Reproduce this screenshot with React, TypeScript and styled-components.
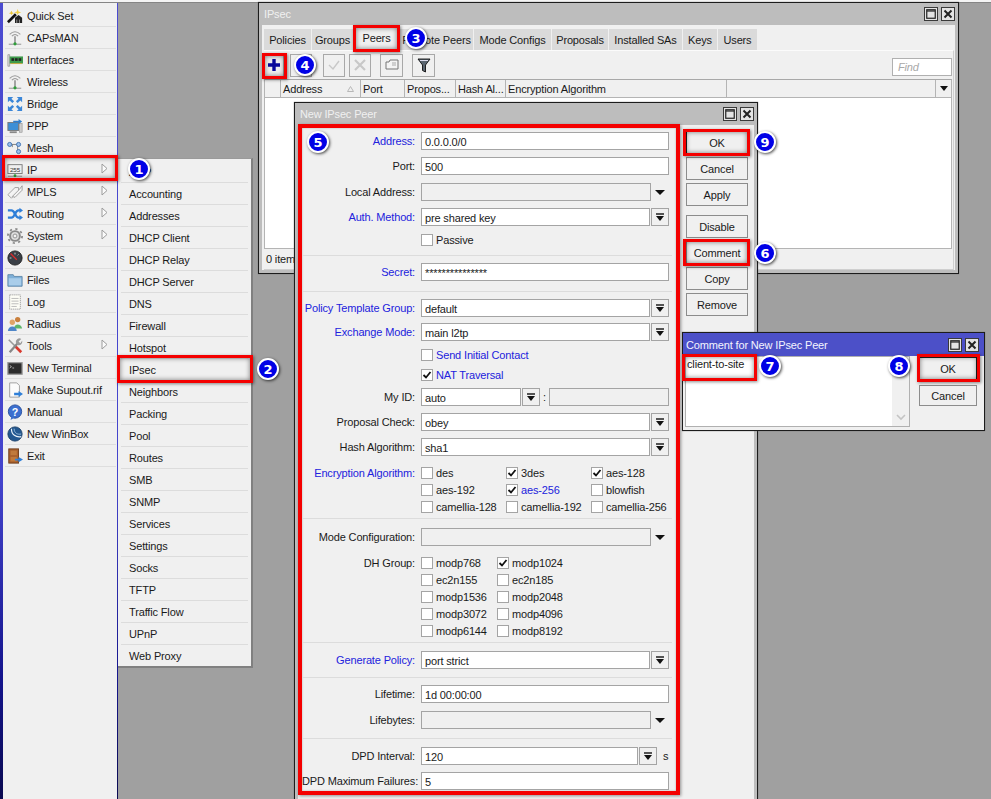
import React from 'react'
import styled, { createGlobalStyle, css } from 'styled-components'

const SIDE_ITEMS: [string, string, boolean?][] = [
    ['wand', 'Quick Set'],
    ['antenna', 'CAPsMAN'],
    ['card', 'Interfaces'],
    ['antenna', 'Wireless'],
    ['bridge', 'Bridge'],
    ['ppp', 'PPP'],
    ['mesh', 'Mesh'],
    ['ip', 'IP', true],
    ['tags', 'MPLS', true],
    ['routing', 'Routing', true],
    ['gear', 'System', true],
    ['gauge', 'Queues'],
    ['folder', 'Files'],
    ['doc', 'Log'],
    ['people', 'Radius'],
    ['tools', 'Tools', true],
    ['terminal', 'New Terminal'],
    ['supout', 'Make Supout.rif'],
    ['help', 'Manual'],
    ['globe', 'New WinBox'],
    ['door', 'Exit'],
]

const IP_ITEMS = [
    'ARP', 'Accounting', 'Addresses', 'DHCP Client', 'DHCP Relay', 'DHCP Server', 'DNS', 'Firewall',
    'Hotspot', 'IPsec', 'Neighbors', 'Packing', 'Pool', 'Routes', 'SMB', 'SNMP', 'Services',
    'Settings', 'Socks', 'TFTP', 'Traffic Flow', 'UPnP', 'Web Proxy',
]

const TABS: [string, number][] = [
    ['Policies', 47], ['Groups', 41], ['Peers', 45], ['Remote Peers', 73], ['Mode Configs', 77],
    ['Proposals', 56], ['Installed SAs', 73], ['Keys', 34], ['Users', 39],
]

const COLUMNS: [string, number][] = [
    ['', 16], ['Address', 80], ['Port', 44], ['Propos...', 51], ['Hash Al...', 50], ['Encryption Algorithm', 221],
]

const ENCRYPTION: [string, boolean, boolean?][] = [
    ['des', false], ['3des', true], ['aes-128', true],
    ['aes-192', false], ['aes-256', true, true], ['blowfish', false],
    ['camellia-128', false], ['camellia-192', false], ['camellia-256', false],
]

const DH_GROUPS: [string, boolean][] = [
    ['modp768', false], ['modp1024', true],
    ['ec2n155', false], ['ec2n185', false],
    ['modp1536', false], ['modp2048', false],
    ['modp3072', false], ['modp4096', false],
    ['modp6144', false], ['modp8192', false],
]

const BADGES: [number, number, number][] = [
    [1, 139, 169], [2, 268, 369], [3, 416, 38], [4, 305, 65], [5, 318, 142],
    [6, 765, 253], [7, 770, 366], [8, 899, 366], [9, 765, 142],
]

function SideIcon({ name }: { name: string }) {
    switch (name) {
        case 'wand':
            return (
                <svg viewBox="0 0 18 18">
                    <path d="M1 16 L10 7" stroke="#111" strokeWidth="3" />
                    <path d="M9 17 V11 L13 8 L17 11 V17 Z" fill="#222" />
                    <path d="M11 17 V13 M14 17 V13" stroke="#999" />
                    <path d="M12 1 L13 4 L16 5 L13 6 L12 8 L11 6 L8 5 L11 4 Z" fill="#f2d24a" />
                    <path d="M5 3 L6 5 L8 6 L6 6.5 L5 8 L4 6.5 L2 6 L4 5 Z" fill="#e9c53a" />
                </svg>
            )
        case 'antenna':
            return (
                <svg viewBox="0 0 18 18" fill="none">
                    <path d="M3 5 Q9 -1 15 5 M5.5 7 Q9 3 12.5 7" stroke="#9a9a9a" strokeWidth="1.2" />
                    <path d="M9 7 V15" stroke="#777" strokeWidth="1.4" />
                    <path d="M2 16 H16" stroke="#888" />
                    <circle cx="9" cy="15.5" r="1.8" fill="#2f9e3a" />
                </svg>
            )
        case 'card':
            return (
                <svg viewBox="0 0 18 18">
                    <path d="M1 3 H3 V16 H1 Z" fill="#ddd" stroke="#888" strokeWidth=".7" />
                    <rect x="3" y="5" width="15" height="8" fill="#3f9b4c" />
                    <rect x="5" y="7" width="3" height="3" fill="#222" />
                    <rect x="9" y="7" width="3" height="3" fill="#222" />
                    <rect x="13" y="7" width="3" height="3" fill="#222" />
                    <path d="M4 13 H17" stroke="#c9a83a" />
                </svg>
            )
        case 'bridge':
            return (
                <svg viewBox="0 0 18 18" fill="#3a86d8">
                    <path d="M1 1 H7 L5 3 L8 6 L6 8 L3 5 L1 7 Z" />
                    <path d="M17 1 V7 L15 5 L12 8 L10 6 L13 3 L11 1 Z" />
                    <path d="M1 17 V11 L3 13 L6 10 L8 12 L5 15 L7 17 Z" />
                    <path d="M17 17 H11 L13 15 L10 12 L12 10 L15 13 L17 11 Z" />
                </svg>
            )
        case 'ppp':
            return (
                <svg viewBox="0 0 18 18">
                    <rect x="1" y="5" width="12" height="9" fill="#3d8fd6" stroke="#777" />
                    <rect x="14" y="6" width="3" height="10" fill="#ccc" stroke="#888" strokeWidth=".6" />
                    <path d="M3 16 H11" stroke="#888" strokeWidth="2" />
                    <path d="M7 3 H13 V1 L17 4 L13 7 V5 H7 Z" fill="#2f7fd0" />
                </svg>
            )
        case 'mesh':
            return (
                <svg viewBox="0 0 18 18" fill="#9cc0ea" stroke="#3a6db0">
                    <path d="M4 5 H14 M12 5 V13 M6 5 V8" fill="none" stroke="#777" />
                    <circle cx="3" cy="5" r="2.3" />
                    <circle cx="13" cy="5" r="2.3" />
                    <circle cx="13" cy="13" r="2.3" />
                </svg>
            )
        case 'ip':
            return (
                <svg viewBox="0 0 18 18">
                    <rect x="1" y="3" width="16" height="10" fill="#efefef" stroke="#777" />
                    <text x="9" y="11" textAnchor="middle" fontSize="7" fontFamily="Liberation Sans, sans-serif" fill="#333">255</text>
                    <path d="M1 16 H17" stroke="#888" />
                    <circle cx="9" cy="15.5" r="1.6" fill="#2f9e3a" />
                </svg>
            )
        case 'tags':
            return (
                <svg viewBox="0 0 18 18" fill="#f4f4f4" stroke="#999">
                    <path d="M1 12 L9 4 H13 V8 L5 16 Z" />
                    <path d="M6 14 L14 6 L17 2 V7 L9 15 Z" />
                </svg>
            )
        case 'routing':
            return (
                <svg viewBox="0 0 18 18" fill="none" stroke="#2f7fd8" strokeWidth="2.6">
                    <path d="M1 5 H5 C9 5 9 13 13 13 H15" />
                    <path d="M1 13 H5 C9 13 9 5 13 5 H15" />
                    <path d="M14 2 L18 5 L14 8 Z M14 10 L18 13 L14 16 Z" fill="#2f7fd8" stroke="none" />
                </svg>
            )
        case 'gear':
            return (
                <svg viewBox="0 0 18 18" fill="none" stroke="#8a8a8a">
                    <circle cx="9" cy="9" r="5.5" strokeWidth="2.2" fill="#ddd" />
                    <circle cx="9" cy="9" r="8" strokeWidth="2" strokeDasharray="2.5 3.8" />
                    <circle cx="9" cy="9" r="2.2" fill="#f4f4f4" />
                </svg>
            )
        case 'gauge':
            return (
                <svg viewBox="0 0 18 18">
                    <circle cx="9" cy="9" r="8" fill="#3a3f46" stroke="#222" />
                    <path d="M4 4 L11 11" stroke="#e02a2a" strokeWidth="1.4" />
                    <path d="M3 9 H5 M9 3 V5 M13 5 L12 6" stroke="#ddd" />
                </svg>
            )
        case 'folder':
            return (
                <svg viewBox="0 0 18 18">
                    <path d="M1 3 H7 L8 5 H17 V16 H1 Z" fill="#7fb0d8" stroke="#5d86a8" />
                    <path d="M2 7 H16 V15 H2 Z" fill="#a9cdea" />
                </svg>
            )
        case 'doc':
            return (
                <svg viewBox="0 0 18 18">
                    <path d="M3 1 H15 V17 H3 Z" fill="#fdfdf6" stroke="#999" strokeDasharray="1.4 .8" />
                    <path d="M5 5 H13 M5 8 H13 M5 11 H13 M5 14 H11" stroke="#b4b4b4" />
                </svg>
            )
        case 'people':
            return (
                <svg viewBox="0 0 18 18">
                    <circle cx="12" cy="4" r="3" fill="#c9803e" />
                    <path d="M8 14 C8 8 16 8 17 14 Z" fill="#5fb56a" />
                    <circle cx="6" cy="7" r="3" fill="#e0a468" />
                    <path d="M1 17 C1 10 11 10 11 17 Z" fill="#4f86c8" />
                </svg>
            )
        case 'tools':
            return (
                <svg viewBox="0 0 18 18" fill="none">
                    <path d="M2 2 L9 9" stroke="#999" strokeWidth="1.8" />
                    <path d="M9 9 L16 16" stroke="#d83a2e" strokeWidth="3" />
                    <path d="M3 16 L12 6" stroke="#888" strokeWidth="2.6" />
                    <path d="M10 5 A4 4 0 0 1 16 1 L13 4 L15 6 L17 3 A4 4 0 0 1 12 8 Z" fill="#9a9a9a" />
                </svg>
            )
        case 'terminal':
            return (
                <svg viewBox="0 0 18 18">
                    <rect x="1" y="3" width="16" height="13" fill="#2d2d2d" stroke="#999" strokeWidth="1.4" />
                    <path d="M3 6 L5 7.5 L3 9 M6 9 H8" stroke="#ddd" fill="none" strokeWidth=".8" />
                </svg>
            )
        case 'supout':
            return (
                <svg viewBox="0 0 18 18">
                    <path d="M3 1 H11 L14 4 V17 H3 Z" fill="#fbfbfb" stroke="#999" />
                    <path d="M8 12 H13 V10 L18 13.5 L13 17 V15 H8 Z" fill="#2f7fd8" />
                </svg>
            )
        case 'help':
            return (
                <svg viewBox="0 0 18 18">
                    <circle cx="9" cy="8.5" r="7.5" fill="#3c6fcf" stroke="#234c9c" />
                    <path d="M5 14 L4 18 L9 15 Z" fill="#3c6fcf" />
                    <text x="9" y="13" textAnchor="middle" fontSize="12" fontWeight="700" fontFamily="Liberation Sans, sans-serif" fill="#fff">?</text>
                </svg>
            )
        case 'globe':
            return (
                <svg viewBox="0 0 18 18">
                    <circle cx="9" cy="9" r="8" fill="#23578f" stroke="#173c66" />
                    <path d="M5 3 C5 10 10 13 16 12" stroke="#e8f0f8" fill="none" strokeWidth="1.3" />
                    <path d="M8 3 C8 8 12 10 16 9" stroke="#9cc0e0" fill="none" />
                </svg>
            )
        case 'door':
            return (
                <svg viewBox="0 0 18 18">
                    <rect x="2" y="1" width="11" height="16" fill="#a9602c" stroke="#6b3a18" />
                    <rect x="4" y="3" width="7" height="5" fill="#c07a3c" />
                    <rect x="4" y="10" width="7" height="5" fill="#c07a3c" />
                    <path d="M9 12 H13 V10 L18 13 L13 16 V14 H9 Z" fill="#2f7fd8" />
                </svg>
            )
        default:
            return null
    }
}

function CheckMark() {
    return (
        <svg width="10" height="10" viewBox="0 0 10 10">
            <path d="M1.5 5 L4 7.5 L8.5 2" fill="none" stroke="#111" strokeWidth="1.8" />
        </svg>
    )
}

function CheckItem({ label, on, blue }: { label: string; on?: boolean; blue?: boolean }) {
    return (
        <CheckWrap $blue={blue}>
            <CheckBox>{on && <CheckMark />}</CheckBox>
            {label}
        </CheckWrap>
    )
}

function WindowButtons() {
    return (
        <WinButtons>
            <WinButton>
                <svg width="10" height="10" viewBox="0 0 10 10">
                    <rect x=".75" y=".75" width="8.5" height="8.5" fill="none" stroke="#222" strokeWidth="1.2" />
                    <path d="M1 2 H9" stroke="#222" strokeWidth="1.2" />
                </svg>
            </WinButton>
            <WinButton>
                <svg width="10" height="10" viewBox="0 0 10 10">
                    <path d="M1.5 1.5 L8.5 8.5 M8.5 1.5 L1.5 8.5" stroke="#222" strokeWidth="2" />
                </svg>
            </WinButton>
        </WinButtons>
    )
}

function FieldRow({ label, blue, gap, children }: { label: string; blue?: boolean; gap: number; children: React.ReactNode }) {
    return (
        <Row $gap={gap}>
            <Label $blue={blue}>{label}</Label>
            {children}
        </Row>
    )
}

function SelectBtn() {
    return (
        <DropBtn>
            <svg width="10" height="9" viewBox="0 0 10 9">
                <path d="M1 1 H9" stroke="#111" strokeWidth="1.4" />
                <path d="M1 3 H9 L5 8 Z" fill="#111" />
            </svg>
        </DropBtn>
    )
}

function SelectField({ label, blue, gap, value }: { label: string; blue?: boolean; gap: number; value: string }) {
    return (
        <FieldRow label={label} blue={blue} gap={gap}>
            <Field>{value}</Field>
            <SelectBtn />
        </FieldRow>
    )
}

function EmptyDrop({ label, gap }: { label: string; gap: number }) {
    return (
        <FieldRow label={label} gap={gap}>
            <Field $off />
            <DropArrow />
        </FieldRow>
    )
}

export default function App() {
    return (
        <Desktop>
            <GlobalStyle />
            <Sidebar>
                {SIDE_ITEMS.map(([icon, label, sub]) => (
                    <SideRow key={label}>
                        <IconBox>
                            <SideIcon name={icon} />
                        </IconBox>
                        {label}
                        {sub && (
                            <SubArrow width="7" height="11" viewBox="0 0 7 11">
                                <path d="M1 1 L6 5.5 L1 10 Z" fill="#fbfbfb" stroke="#9c9c9c" />
                            </SubArrow>
                        )}
                        {label === 'IP' && <Mark $inset="-4px -2px -1px -3px" />}
                    </SideRow>
                ))}
            </Sidebar>

            <SubMenu>
                {IP_ITEMS.map((item) => (
                    <MenuRow key={item}>
                        {item}
                        {item === 'IPsec' && <Mark $inset="-4px -5px -3px -4px" />}
                    </MenuRow>
                ))}
            </SubMenu>

            <Window $x={258} $y={2} $w={701} $h={272}>
                <TitleBar>
                    <TitleText>IPsec</TitleText>
                    <WindowButtons />
                </TitleBar>
                <WindowBody>
                    <TabRow>
                        {TABS.map(([tab, w]) => (
                            <Tab key={tab} $w={w} $active={tab === 'Peers'}>
                                {tab}
                                {tab === 'Peers' && <Mark $inset="-4px -1px -2px -1px" />}
                            </Tab>
                        ))}
                    </TabRow>
                    <TabPanel>
                        <Toolbar>
                            <ToolBtn $w={20} $mr={6}>
                                <svg width="16" height="16" viewBox="0 0 16 16">
                                    <path d="M8 2 V14 M2 8 H14" stroke="#0a0a9a" strokeWidth="3.4" />
                                </svg>
                                <Mark $inset="-2px -4px -3px -3px" />
                            </ToolBtn>
                            <ToolBtn $w={22} $mr={11} />
                            <ToolBtn $w={22} $mr={4}>
                                <svg width="14" height="14" viewBox="0 0 14 14">
                                    <path d="M2 7 L6 11 L12 3" fill="none" stroke="#c8c8c8" strokeWidth="1.4" />
                                </svg>
                            </ToolBtn>
                            <ToolBtn $w={22} $mr={9}>
                                <svg width="14" height="14" viewBox="0 0 14 14">
                                    <path d="M2 2 L12 12 M12 2 L2 12" stroke="#c8c8c8" strokeWidth="2.2" />
                                </svg>
                            </ToolBtn>
                            <ToolBtn $w={23} $mr={9}>
                                <svg width="14" height="12" viewBox="0 0 14 12">
                                    <path d="M1 3 H4 L5 1 H13 V10 H1 Z" fill="#f4f4f4" stroke="#777" />
                                    <path d="M7 4 H11 M7 6 H11" stroke="#aaa" />
                                </svg>
                            </ToolBtn>
                            <ToolBtn $w={23} $mr={0}>
                                <svg width="14" height="15" viewBox="0 0 14 15">
                                    <path d="M1 1 H13 L8.5 7 V14 L5.5 12.5 V7 Z" fill="#5a6570" stroke="#111" strokeWidth=".9" />
                                    <path d="M3 2.5 H11" stroke="#dde" />
                                </svg>
                            </ToolBtn>
                            <FindBox>Find</FindBox>
                        </Toolbar>
                        <Table>
                            <THead>
                                {COLUMNS.map(([name, w]) => (
                                    <TH key={w + name} $w={w}>
                                        {name}
                                        {name === 'Address' && (
                                            <SortMark width="7" height="6" viewBox="0 0 7 6">
                                                <path d="M3.5 .5 L6.5 5.5 H.5 Z" fill="none" stroke="#b8b8b8" />
                                            </SortMark>
                                        )}
                                    </TH>
                                ))}
                                <THFill />
                                <THMenu />
                            </THead>
                            <TBody />
                        </Table>
                        <Status>0 items</Status>
                    </TabPanel>
                </WindowBody>
            </Window>

            <Window $x={294} $y={102} $w={464} $h={720}>
                <TitleBar>
                    <TitleText>New IPsec Peer</TitleText>
                    <WindowButtons />
                </TitleBar>
                <DialogBody>
                    <PeerForm>
                        <FieldRow label="Address:" blue gap={4}>
                            <Field>0.0.0.0/0</Field>
                        </FieldRow>
                        <FieldRow label="Port:" gap={7}>
                            <Field>500</Field>
                        </FieldRow>
                        <EmptyDrop label="Local Address:" gap={8} />
                        <SelectField label="Auth. Method:" blue gap={7} value="pre shared key" />
                        <FieldRow label="" gap={5}>
                            <CheckItem label="Passive" />
                        </FieldRow>
                        <Divider $gap={6} />
                        <FieldRow label="Secret:" blue gap={7}>
                            <Field>***************</Field>
                        </FieldRow>
                        <Divider $gap={10} />
                        <SelectField label="Policy Template Group:" blue gap={7} value="default" />
                        <SelectField label="Exchange Mode:" blue gap={6} value="main l2tp" />
                        <FieldRow label="" gap={5}>
                            <CheckItem label="Send Initial Contact" blue />
                        </FieldRow>
                        <FieldRow label="" gap={2}>
                            <CheckItem label="NAT Traversal" on blue />
                        </FieldRow>
                        <FieldRow label="My ID:" gap={4}>
                            <Field $w={100}>auto</Field>
                            <SelectBtn />
                            <Colon>:</Colon>
                            <Field $off />
                        </FieldRow>
                        <SelectField label="Proposal Check:" gap={7} value="obey" />
                        <SelectField label="Hash Algorithm:" gap={7} value="sha1" />
                        <GridRow $gap={8}>
                            <Label $blue>Encryption Algorithm:</Label>
                            <CheckGrid $cols={3} $col={85}>
                                {ENCRYPTION.map(([name, on, blue]) => (
                                    <CheckItem key={name} label={name} on={on} blue={blue} />
                                ))}
                            </CheckGrid>
                        </GridRow>
                        <Divider $gap={3} />
                        <EmptyDrop label="Mode Configuration:" gap={9} />
                        <GridRow $gap={8}>
                            <Label>DH Group:</Label>
                            <CheckGrid $cols={2} $col={76}>
                                {DH_GROUPS.map(([name, on]) => (
                                    <CheckItem key={name} label={name} on={on} />
                                ))}
                            </CheckGrid>
                        </GridRow>
                        <Divider $gap={3} />
                        <SelectField label="Generate Policy:" blue gap={8} value="port strict" />
                        <Divider $gap={8} />
                        <FieldRow label="Lifetime:" gap={7}>
                            <Field>1d 00:00:00</Field>
                        </FieldRow>
                        <EmptyDrop label="Lifebytes:" gap={8} />
                        <Divider $gap={9} />
                        <FieldRow label="DPD Interval:" gap={8}>
                            <Field>120</Field>
                            <SelectBtn />
                            <Unit>s</Unit>
                        </FieldRow>
                        <FieldRow label="DPD Maximum Failures:" gap={7}>
                            <Field>5</Field>
                        </FieldRow>
                    </PeerForm>
                    <ButtonColumn>
                        <Button $default>
                            OK
                            <Mark $inset="-3px -3px -3px -4px" />
                        </Button>
                        <Button>Cancel</Button>
                        <Button>Apply</Button>
                        <Button $mt={6}>Disable</Button>
                        <Button>
                            Comment
                            <Mark $inset="-3px -3px -3px -4px" />
                        </Button>
                        <Button>Copy</Button>
                        <Button>Remove</Button>
                    </ButtonColumn>
                </DialogBody>
            </Window>

            <Window $x={682} $y={332} $w={303} $h={99} $active>
                <TitleBar $active>
                    <TitleText $active>Comment for New IPsec Peer</TitleText>
                    <WindowButtons />
                </TitleBar>
                <CommentBody>
                    <CommentArea>
                        <CommentText>
                            client-to-site
                            <Mark $inset="-4px -10px -8px -5px" />
                        </CommentText>
                        <ScrollTrack>
                            <svg width="10" height="7" viewBox="0 0 10 7">
                                <path d="M1 1 L5 5 L9 1" fill="none" stroke="#c4c4c4" strokeWidth="1.6" />
                            </svg>
                        </ScrollTrack>
                    </CommentArea>
                    <CommentButtons>
                        <Button $default $h={24}>
                            OK
                            <Mark $inset="-4px -4px -2px -3px" />
                        </Button>
                        <Button $h={21}>Cancel</Button>
                    </CommentButtons>
                </CommentBody>
            </Window>

            {BADGES.map(([n, x, y]) => (
                <Badge key={n} $x={x} $y={y}>
                    {n}
                </Badge>
            ))}
        </Desktop>
    )
}

const GlobalStyle = createGlobalStyle`
    html, body {
        margin: 0;
        padding: 0;
        background: #a0a0a0;
    }
    * {
        box-sizing: border-box;
    }
`

const Desktop = styled.div`
    position: relative;
    width: 991px;
    height: 799px;
    overflow: hidden;
    display: flex;
    background: linear-gradient(#f4f4f4 0 2px, #858585 2px 3px, #a0a0a0 3px);
    font-family: 'Liberation Sans', Arial, sans-serif;
    font-size: 11px;
    letter-spacing: -0.15px;
    color: #1a1a1a;
`

const Sidebar = styled.nav`
    width: 118px;
    height: 796px;
    margin-top: 3px;
    padding-top: 2px;
    background: #f0f0f0;
    border-left: 3px solid;
    border-image: linear-gradient(#4b4bd0, #4444cc 60%, #14148c 85%, #0a0a50) 1;
    border-right: 1px solid #6e6e6e;
`

const SideRow = styled.div`
    position: relative;
    display: flex;
    align-items: center;
    height: 22px;
    margin: 0 1px 0 2px;
    padding-left: 2px;
    border-bottom: 1px solid #dedede;
`

const IconBox = styled.span`
    display: flex;
    width: 16px;
    height: 16px;
    margin-right: 4px;
    flex-shrink: 0;

    svg {
        width: 16px;
        height: 16px;
    }
`

const SubArrow = styled.svg`
    position: absolute;
    top: 4px;
    right: 8px;
`

const Mark = styled.span<{ $inset: string }>`
    position: absolute;
    inset: ${(p) => p.$inset};
    border: 3px solid #f40000;
    box-shadow: 1px 1px 3px rgba(0, 0, 0, 0.45), inset 0 0 5px rgba(0, 0, 0, 0.5);
    pointer-events: none;
    z-index: 3;
`

const SubMenu = styled.div`
    position: absolute;
    left: 118px;
    top: 158px;
    width: 135px;
    height: 510px;
    padding: 2px 3px 0;
    background: #f0f0f0;
    border-top: 1px solid #9a9a9a;
    border-right: 2px solid #808080;
    border-bottom: 2px solid #808080;
`

const MenuRow = styled.div`
    position: relative;
    display: flex;
    align-items: center;
    height: 22px;
    padding-left: 8px;
    border-bottom: 1px solid #dcdcdc;

    &:last-child {
        border-bottom: none;
    }
`

const Window = styled.section<{ $x: number; $y: number; $w: number; $h: number; $active?: boolean }>`
    position: absolute;
    left: ${(p) => p.$x}px;
    top: ${(p) => p.$y}px;
    width: ${(p) => p.$w}px;
    height: ${(p) => p.$h}px;
    display: flex;
    flex-direction: column;
    padding: ${(p) => (p.$active ? '0' : '0 3px 3px')};
    border: 1px solid #1c1c1c;
    box-shadow: 0 0 1px #666;
    background: ${(p) => (p.$active ? '#f0f0f0' : '#bdbdbd')};
`

const TitleBar = styled.header<{ $active?: boolean }>`
    display: flex;
    align-items: center;
    justify-content: space-between;
    height: 22px;
    flex-shrink: 0;
    ${(p) => p.$active && 'background: #4c50c8; padding: 0 5px 0 3px; height: 23px;'}
`

const TitleText = styled.span<{ $active?: boolean }>`
    padding-left: ${(p) => (p.$active ? 0 : 2)}px;
    color: ${(p) => (p.$active ? '#f4f4ff' : '#f0f0f0')};
`

const WinButtons = styled.div`
    display: flex;
    gap: 3px;
`

const WinButton = styled.span`
    display: flex;
    align-items: center;
    justify-content: center;
    width: 14px;
    height: 14px;
    border: 1px solid #3a3a3a;
    background: #e4e4e4;
`

const WindowBody = styled.div`
    flex: 1;
    display: flex;
    flex-direction: column;
    padding: 4px 0 0 2px;
    background: #f0f0f0;
`

const TabRow = styled.div`
    display: flex;
    gap: 1px;
    height: 21px;
    flex-shrink: 0;
`

const Tab = styled.div<{ $w: number; $active?: boolean }>`
    position: relative;
    display: flex;
    align-items: center;
    justify-content: center;
    width: ${(p) => p.$w}px;
    white-space: nowrap;
    background: ${(p) => (p.$active ? '#f0f0f0' : '#dadada')};
    ${(p) => p.$active && 'padding-bottom: 3px;'}
`

const TabPanel = styled.div`
    flex: 1;
    display: flex;
    flex-direction: column;
    margin-right: 1px;
    border-top: 1px solid #fbfbfb;
    border-right: 1px solid #cfcfcf;
    border-bottom: 1px solid #cfcfcf;
`

const Toolbar = styled.div`
    display: flex;
    align-items: center;
    height: 28px;
    flex-shrink: 0;
    padding-right: 1px;
`

const ToolBtn = styled.span<{ $w: number; $mr: number }>`
    position: relative;
    display: flex;
    align-items: center;
    justify-content: center;
    width: ${(p) => p.$w}px;
    height: 23px;
    margin-right: ${(p) => p.$mr}px;
    border: 1px solid #a8a8a8;
    background: #f0f0f0;
`

const FindBox = styled.span`
    display: flex;
    align-items: center;
    width: 60px;
    height: 18px;
    margin: 4px 0 0 auto;
    padding-left: 5px;
    border: 1px solid #b0b0b0;
    background: #ffffff;
    color: #a8a8a8;
    font-style: italic;
`

const Table = styled.div`
    flex: 1;
    display: flex;
    flex-direction: column;
    margin-right: 1px;
    border: 1px solid #b4b4b4;
    border-top: 1px solid #a8a8a8;
`

const THead = styled.div`
    display: flex;
    height: 18px;
    flex-shrink: 0;
    border-bottom: 1px solid #b4b4b4;
    background: #f0f0f0;
`

const headCell = css`
    position: relative;
    display: flex;
    align-items: center;
    border-right: 1px solid #b4b4b4;
`

const TH = styled.div<{ $w: number }>`
    ${headCell}
    width: ${(p) => p.$w}px;
    padding-left: 2px;
    white-space: nowrap;
`

const THFill = styled.div`
    ${headCell}
    flex: 1;
`

const THMenu = styled.div`
    display: flex;
    align-items: center;
    justify-content: center;
    width: 15px;

    &::after {
        content: '';
        border-top: 5px solid #111;
        border-left: 4px solid transparent;
        border-right: 4px solid transparent;
    }
`

const SortMark = styled.svg`
    position: absolute;
    right: 6px;
    top: 6px;
`

const TBody = styled.div`
    flex: 1;
    background: #ffffff;
`

const Status = styled.div`
    display: flex;
    align-items: center;
    height: 20px;
    flex-shrink: 0;
    padding-left: 2px;
`

const DialogBody = styled.div`
    flex: 1;
    display: flex;
    align-items: flex-start;
    background: #f0f0f0;
`

const PeerForm = styled.div`
    width: 382px;
    height: 671px;
    margin-top: -1px;
    flex-shrink: 0;
    padding-right: 7px;
    border: 4px solid #f40000;
    box-shadow: 1px 1px 3px rgba(0, 0, 0, 0.4), inset 0 0 2px rgba(0, 0, 0, 0.3);
`

const Row = styled.div<{ $gap: number }>`
    display: flex;
    align-items: center;
    height: 18px;
    margin-top: ${(p) => p.$gap}px;
`

const GridRow = styled.div<{ $gap: number }>`
    display: flex;
    align-items: flex-start;
    margin-top: ${(p) => p.$gap}px;
`

const Label = styled.span<{ $blue?: boolean }>`
    width: 113px;
    margin-right: 6px;
    padding-top: 1px;
    flex-shrink: 0;
    text-align: right;
    white-space: nowrap;
    line-height: 17px;
    color: ${(p) => (p.$blue ? '#2222dd' : '#1a1a1a')};
`

const Field = styled.div<{ $off?: boolean; $w?: number }>`
    display: flex;
    align-items: center;
    height: 18px;
    min-width: 0;
    flex: ${(p) => (p.$w ? `0 0 ${p.$w}px` : '1')};
    padding: 1px 0 0 3px;
    border: 1px solid #a4a4a4;
    background: ${(p) => (p.$off ? '#f0f0f0' : '#ffffff')};
`

const DropBtn = styled.span`
    display: flex;
    align-items: center;
    justify-content: center;
    width: 18px;
    height: 18px;
    margin-left: 1px;
    flex-shrink: 0;
    border: 1px solid #a4a4a4;
    background: #f0f0f0;
`

const DropArrow = styled.span`
    display: flex;
    align-items: center;
    justify-content: center;
    width: 18px;
    height: 16px;
    flex-shrink: 0;

    &::after {
        content: '';
        border-top: 5px solid #111;
        border-left: 5px solid transparent;
        border-right: 5px solid transparent;
    }
`

const Colon = styled.span`
    width: 9px;
    text-align: center;
    flex-shrink: 0;
`

const Unit = styled.span`
    width: 12px;
    padding-left: 6px;
    flex-shrink: 0;
`

const Divider = styled.hr<{ $gap: number }>`
    height: 1px;
    margin: ${(p) => p.$gap}px -3px 0 0;
    border: none;
    background: #dcdcdc;
`

const CheckGrid = styled.div<{ $cols: number; $col: number }>`
    display: grid;
    grid-template-columns: repeat(${(p) => p.$cols}, ${(p) => p.$col}px);
    grid-auto-rows: 17px;
`

const CheckWrap = styled.label<{ $blue?: boolean }>`
    display: flex;
    align-items: center;
    gap: 3px;
    white-space: nowrap;
    color: ${(p) => (p.$blue ? '#2222dd' : '#1a1a1a')};
`

const CheckBox = styled.span`
    display: flex;
    align-items: center;
    justify-content: center;
    width: 12px;
    height: 12px;
    flex-shrink: 0;
    border: 1px solid #a4a4a4;
    background: #ffffff;
`

const ButtonColumn = styled.div`
    display: flex;
    flex-direction: column;
    gap: 3px;
    width: 62px;
    margin: 6px 0 0 6px;
`

const Button = styled.div<{ $default?: boolean; $mt?: number; $h?: number }>`
    position: relative;
    display: flex;
    align-items: center;
    justify-content: center;
    height: ${(p) => p.$h ?? 23}px;
    margin-top: ${(p) => p.$mt ?? 0}px;
    border: 1px solid ${(p) => (p.$default ? '#202020' : '#8c8c8c')};
    background: #f0f0f0;
`

const CommentBody = styled.div`
    flex: 1;
    display: flex;
    padding: 0 0 3px 2px;
`

const CommentArea = styled.div`
    position: relative;
    width: 225px;
    flex-shrink: 0;
    display: flex;
    border: 1px solid #b0b0b0;
    background: #ffffff;
`

const CommentText = styled.span`
    position: absolute;
    top: 1px;
    left: 1px;
    height: 15px;
    padding-right: 3px;
`

const ScrollTrack = styled.div`
    display: flex;
    align-items: flex-end;
    justify-content: center;
    width: 17px;
    margin-left: auto;
    padding-bottom: 5px;
    background: #f0f0f0;
`

const CommentButtons = styled.div`
    display: flex;
    flex-direction: column;
    gap: 4px;
    width: 67px;
    padding: 1px 0 0 9px;
`

const Badge = styled.span<{ $x: number; $y: number }>`
    position: absolute;
    left: ${(p) => p.$x - 11}px;
    top: ${(p) => p.$y - 11}px;
    display: flex;
    align-items: center;
    justify-content: center;
    width: 22px;
    height: 22px;
    border: 2px solid #ffffff;
    border-radius: 50%;
    background: #0000e6;
    box-shadow: 1px 1px 3px rgba(0, 0, 0, 0.7);
    color: #ffffff;
    font-family: 'DejaVu Sans', sans-serif;
    font-size: 13px;
    font-weight: 700;
    z-index: 5;
`
